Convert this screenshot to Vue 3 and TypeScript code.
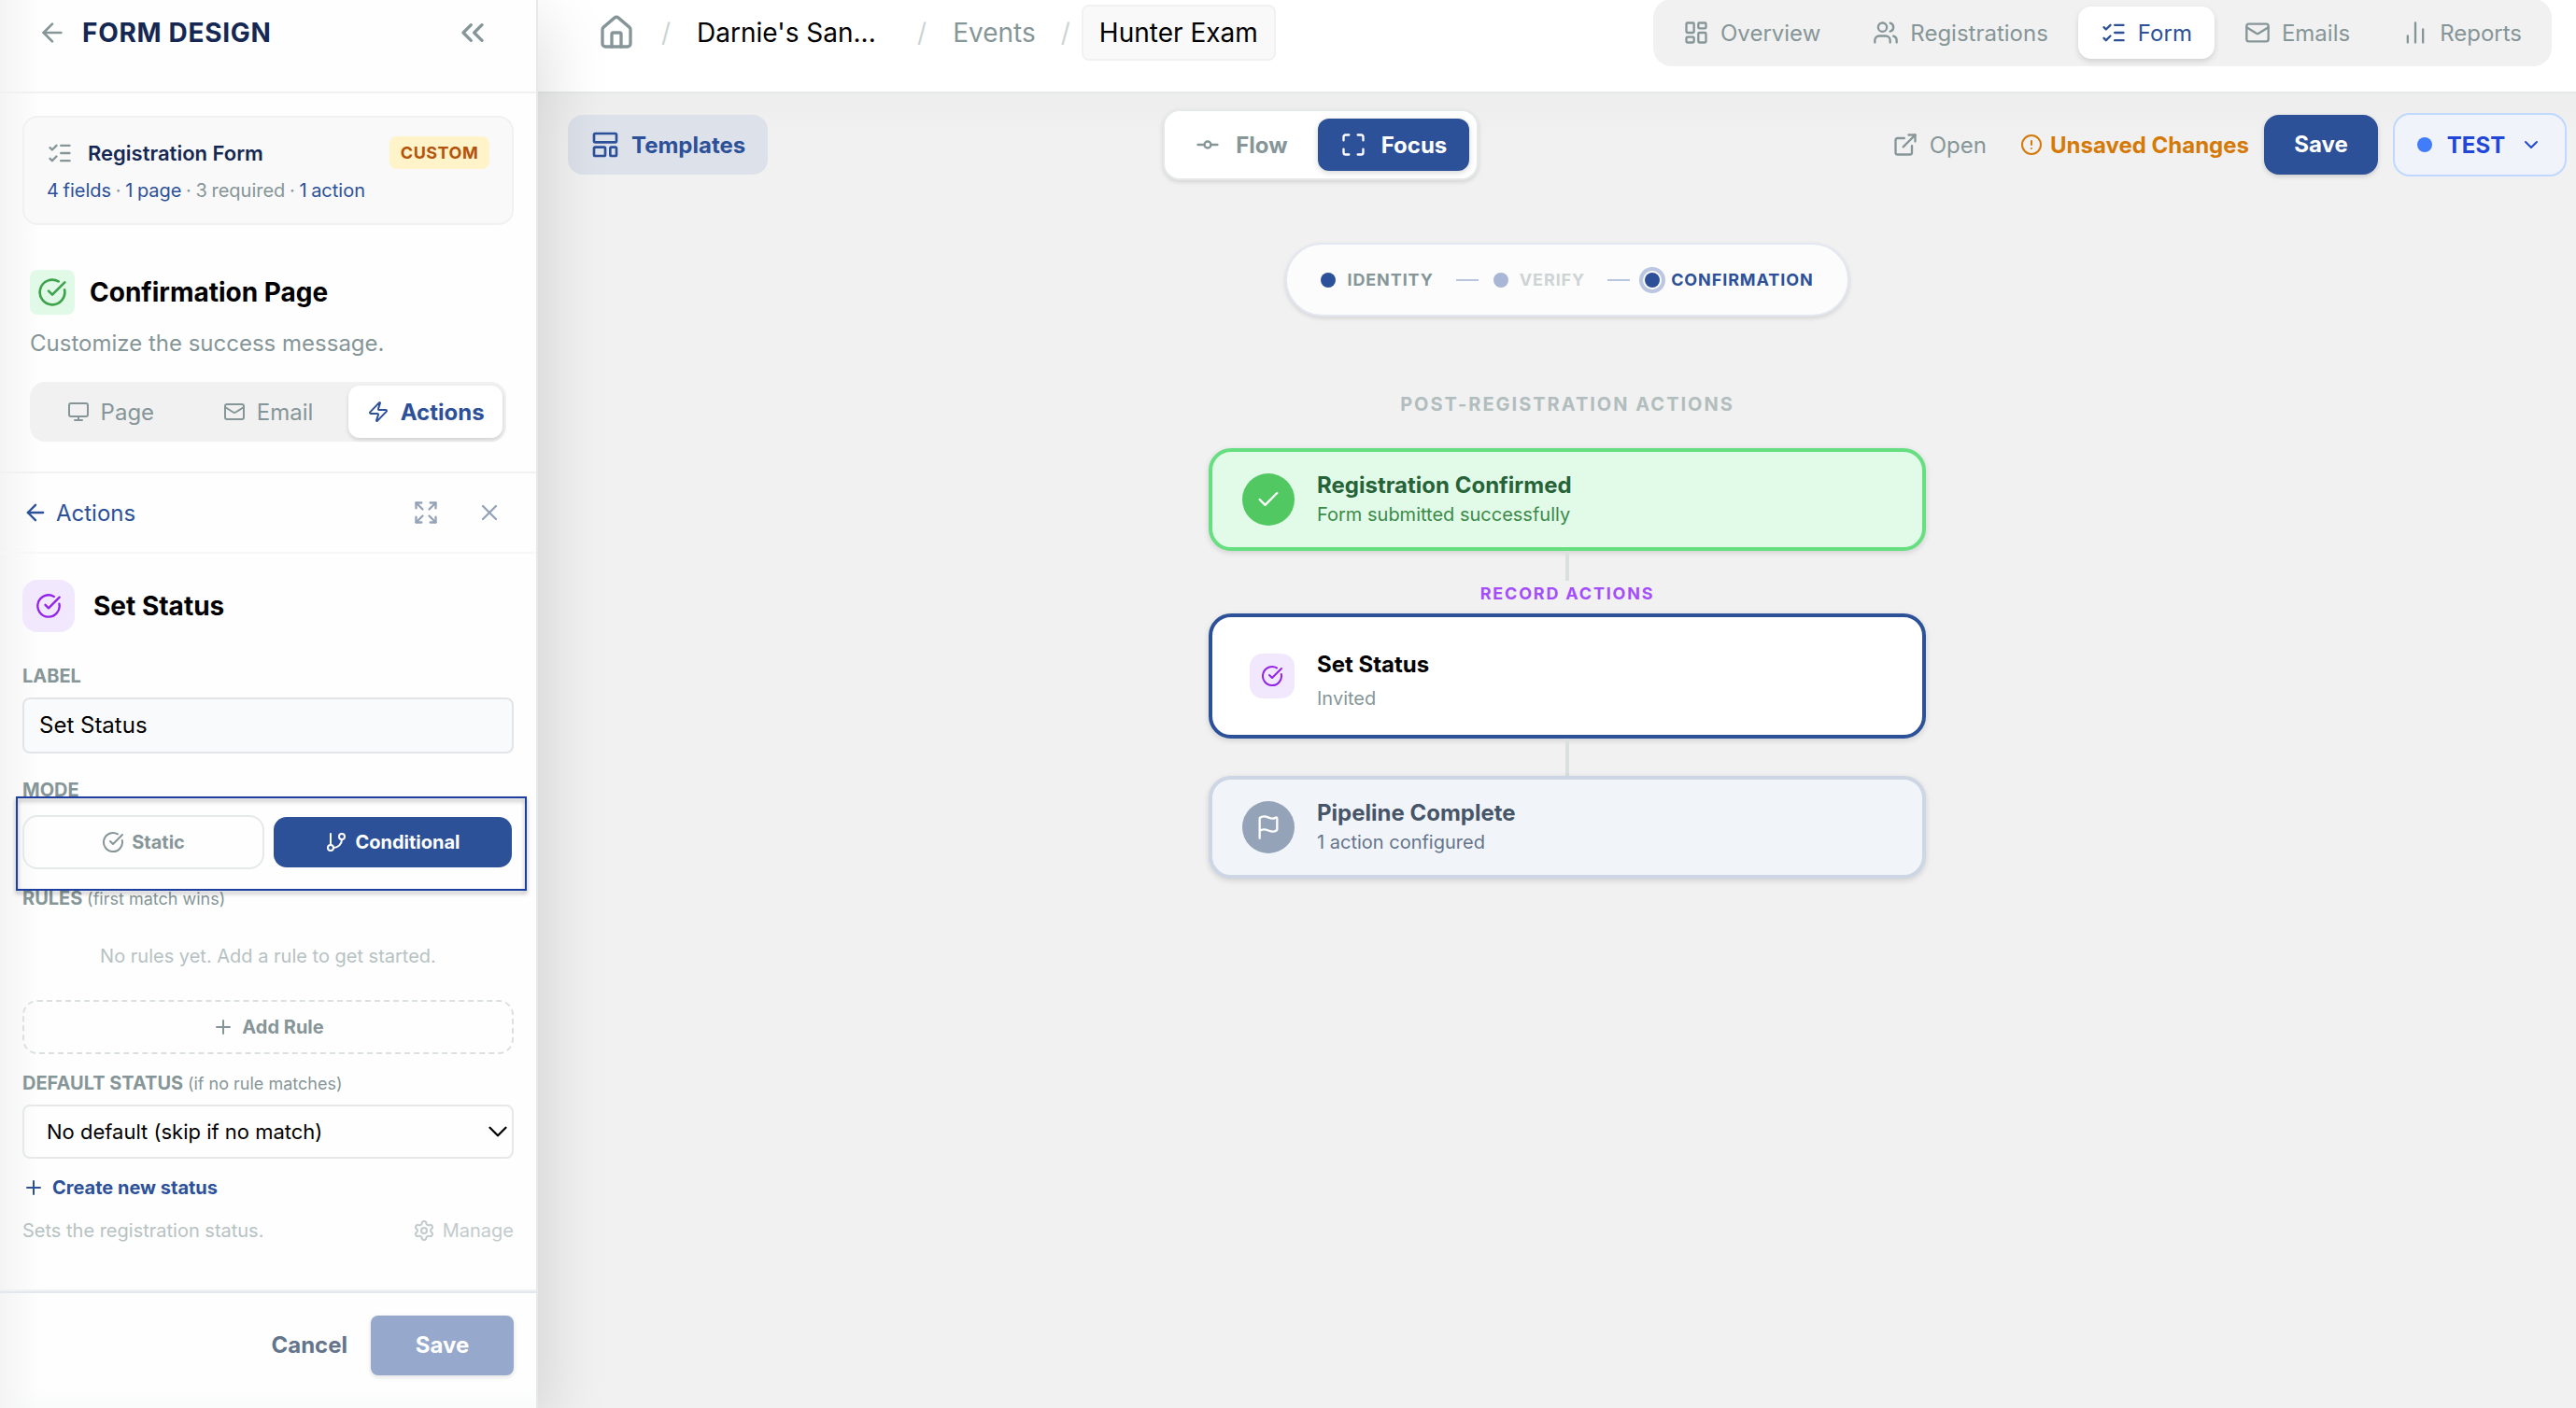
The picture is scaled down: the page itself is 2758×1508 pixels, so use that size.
<script setup lang="ts">
import { h, type FunctionalComponent } from 'vue'

type Shape = [tag: string, attrs: Record<string, string | number>]
const p = (d: string): Shape => ['path', { d }]
const rect = (x: number, y: number, width: number, height: number, rx = 1): Shape => ['rect', { x, y, width, height, rx }]
const circle = (cx: number, cy: number, r: number): Shape => ['circle', { cx, cy, r }]

const shapes: Record<string, Shape[]> = {
  back: [p('m12 19-7-7 7-7'), p('M19 12H5')],
  collapse: [p('m11 17-5-5 5-5'), p('m18 17-5-5 5-5')],
  checks: [p('M13 5h8'), p('M13 12h8'), p('M13 19h8'), p('m3 17 2 2 4-4'), p('m3 7 2 2 4-4')],
  circleCheck: [p('M21.801 10A10 10 0 1 1 17 3.335'), p('m9 11 3 3L22 4')],
  monitor: [rect(2, 3, 20, 14, 2), p('M8 21h8'), p('M12 17v4')],
  mail: [rect(2, 4, 20, 16, 2), p('m22 7-8.991 5.727a2 2 0 0 1-2.009 0L2 7')],
  zap: [p('M4 14a1 1 0 0 1-.78-1.63l9.9-10.2a.5.5 0 0 1 .86.46l-1.92 6.02A1 1 0 0 0 13 10h7a1 1 0 0 1 .78 1.63l-9.9 10.2a.5.5 0 0 1-.86-.46l1.92-6.02A1 1 0 0 0 11 14z')],
  expand: [p('m15 15 6 6'), p('m15 9 6-6'), p('M21 16v5h-5'), p('M21 8V3h-5'), p('M3 16v5h5'), p('m3 21 6-6'), p('M3 8V3h5'), p('M9 9 3 3')],
  close: [p('M18 6 6 18'), p('m6 6 12 12')],
  branch: [p('M6 3v12'), circle(18, 6, 3), circle(6, 18, 3), p('M18 9a9 9 0 0 1-9 9')],
  plus: [p('M5 12h14'), p('M12 5v14')],
  chevron: [p('m6 9 6 6 6-6')],
  gear: [p('M9.671 4.136a2.34 2.34 0 0 1 4.659 0 2.34 2.34 0 0 0 3.319 1.915 2.34 2.34 0 0 1 2.33 4.033 2.34 2.34 0 0 0 0 3.831 2.34 2.34 0 0 1-2.33 4.033 2.34 2.34 0 0 0-3.319 1.915 2.34 2.34 0 0 1-4.659 0 2.34 2.34 0 0 0-3.32-1.915 2.34 2.34 0 0 1-2.33-4.033 2.34 2.34 0 0 0 0-3.831A2.34 2.34 0 0 1 6.35 6.051a2.34 2.34 0 0 0 3.319-1.915'), circle(12, 12, 3)],
  house: [p('M15 21v-8a1 1 0 0 0-1-1h-4a1 1 0 0 0-1 1v8'), p('M3 10a2 2 0 0 1 .709-1.528l7-5.999a2 2 0 0 1 2.582 0l7 5.999A2 2 0 0 1 21 10v9a2 2 0 0 1-2 2H5a2 2 0 0 1-2-2z')],
  dashboard: [rect(3, 3, 7, 9), rect(14, 3, 7, 5), rect(14, 12, 7, 9), rect(3, 16, 7, 5)],
  users: [p('M16 21v-2a4 4 0 0 0-4-4H6a4 4 0 0 0-4 4v2'), p('M16 3.128a4 4 0 0 1 0 7.744'), p('M22 21v-2a4 4 0 0 0-3-3.87'), circle(9, 7, 4)],
  bars: [p('M5 21v-6'), p('M12 21V3'), p('M19 21V9')],
  template: [rect(3, 3, 18, 7), rect(3, 14, 9, 7), rect(16, 14, 5, 7)],
  commit: [circle(12, 12, 3), p('M3 12h6'), p('M15 12h6')],
  maximize: [p('M8 3H5a2 2 0 0 0-2 2v3'), p('M21 8V5a2 2 0 0 0-2-2h-3'), p('M3 16v3a2 2 0 0 0 2 2h3'), p('M16 21h3a2 2 0 0 0 2-2v-3')],
  external: [p('M15 3h6v6'), p('M10 14 21 3'), p('M18 13v6a2 2 0 0 1-2 2H5a2 2 0 0 1-2-2V8a2 2 0 0 1 2-2h6')],
  alert: [circle(12, 12, 10), p('M12 8v4'), p('M12 16h.01')],
  check: [p('M20 6 9 17l-5-5')],
  flag: [p('M4 22V4a1 1 0 0 1 .4-.8A6 6 0 0 1 8 2c3 0 5 2 7.333 2q2 0 3.067-.8A1 1 0 0 1 20 4v10a1 1 0 0 1-.4.8A6 6 0 0 1 16 16c-3 0-5-2-8-2a6 6 0 0 0-4 1.528')],
}

const Icon: FunctionalComponent<{ name: string; size?: number; w?: number }> = (props) =>
  h('svg', {
    width: props.size ?? 28, height: props.size ?? 28, viewBox: '0 0 24 24', fill: 'none',
    stroke: 'currentColor', 'stroke-width': props.w ?? 2, 'stroke-linecap': 'round', 'stroke-linejoin': 'round',
    style: 'flex:none;display:block',
  }, shapes[props.name].map(([tag, attrs]) => h(tag, attrs)))
Icon.props = ['name', 'size', 'w']

const pageTabs = [
  { label: 'Page', icon: 'monitor' },
  { label: 'Email', icon: 'mail' },
  { label: 'Actions', icon: 'zap', active: true },
]
const navTabs = [
  { label: 'Overview', icon: 'dashboard' },
  { label: 'Registrations', icon: 'users' },
  { label: 'Form', icon: 'checks', active: true },
  { label: 'Emails', icon: 'mail' },
  { label: 'Reports', icon: 'bars' },
]
</script>

<template>
  <div class="app">
    <aside class="sidebar">
      <header class="side-head">
        <Icon name="back" :size="32" />
        <h1>FORM DESIGN</h1>
        <Icon name="collapse" :size="40" class="push" />
      </header>

      <section class="summary">
        <div class="summary-top">
          <Icon name="checks" />
          <strong>Registration Form</strong>
          <span class="badge">CUSTOM</span>
        </div>
        <p><a>4 fields</a> · <a>1 page</a> · 3 required · <a>1 action</a></p>
      </section>

      <section class="page-info">
        <div class="page-title">
          <span class="page-icon"><Icon name="circleCheck" :size="32" /></span>
          <h2>Confirmation Page</h2>
        </div>
        <p class="desc">Customize the success message.</p>
        <div class="tabs">
          <div v-for="t in pageTabs" :key="t.label" class="tab" :class="{ active: t.active }">
            <Icon :name="t.icon" :size="24" /><span>{{ t.label }}</span>
          </div>
        </div>
      </section>

      <div class="crumb-bar">
        <a><Icon name="back" /><span>Actions</span></a>
        <Icon name="expand" class="push" />
        <Icon name="close" />
      </div>

      <section class="editor">
        <div class="editor-title">
          <span class="violet-icon"><Icon name="circleCheck" /></span>
          <h2>Set Status</h2>
        </div>
        <div class="label l-label">LABEL</div>
        <div class="input">Set Status</div>
        <div class="label l-mode">MODE</div>
        <div class="modes">
          <div class="mode"><Icon name="circleCheck" :size="24" /><span>Static</span></div>
          <div class="mode on"><Icon name="branch" :size="24" /><span>Conditional</span></div>
          <div class="marker"></div>
        </div>
        <div class="label l-rules">RULES <small>(first match wins)</small></div>
        <p class="empty">No rules yet. Add a rule to get started.</p>
        <div class="add"><Icon name="plus" :size="24" /><span>Add Rule</span></div>
        <div class="label l-default">DEFAULT STATUS <small>(if no rule matches)</small></div>
        <div class="select"><span>No default (skip if no match)</span><Icon name="chevron" :size="34" :w="1.6" /></div>
        <div class="create"><Icon name="plus" :size="24" /><span>Create new status</span></div>
        <div class="hint"><span>Sets the registration status.</span><span class="manage"><Icon name="gear" :size="24" />Manage</span></div>
      </section>

      <footer class="side-foot">
        <span class="cancel">Cancel</span>
        <span class="save-dim">Save</span>
      </footer>
    </aside>

    <main class="main">
      <header class="top">
        <nav class="crumbs">
          <Icon name="house" :size="40" class="home" />
          <i>/</i><span class="org">Darnie's San...</span>
          <i>/</i><span class="events">Events</span>
          <i>/</i><span class="chip">Hunter Exam</span>
        </nav>
        <nav class="nav">
          <div v-for="t in navTabs" :key="t.label" class="nav-tab" :class="{ active: t.active }">
            <Icon :name="t.icon" /><span>{{ t.label }}</span>
          </div>
        </nav>
      </header>

      <div class="canvas">
        <div class="toolbar">
          <div class="templates"><Icon name="template" :size="32" /><span>Templates</span></div>
          <div class="view">
            <div class="view-tab"><Icon name="commit" /><span>Flow</span></div>
            <div class="view-tab active"><Icon name="maximize" /><span>Focus</span></div>
          </div>
          <div class="tools">
            <div class="open"><Icon name="external" /><span>Open</span></div>
            <div class="unsaved"><Icon name="alert" :size="24" /><span>Unsaved Changes</span></div>
            <div class="save">Save</div>
            <div class="env"><b></b><span>TEST</span><Icon name="chevron" :size="24" /></div>
          </div>
        </div>

        <div class="stage">
          <div class="steps">
            <b class="dot"></b><span>IDENTITY</span><i></i>
            <b class="dot faded"></b><span class="muted">VERIFY</span><i></i>
            <b class="dot ring"></b><span class="current">CONFIRMATION</span>
          </div>
          <div class="caption">POST-REGISTRATION ACTIONS</div>

          <div class="card green">
            <span class="round"><Icon name="check" /></span>
            <div><h3>Registration Confirmed</h3><p>Form submitted successfully</p></div>
          </div>
          <div class="wire short"></div>
          <div class="group">RECORD ACTIONS</div>
          <div class="card selected">
            <span class="violet-icon small"><Icon name="circleCheck" :size="24" /></span>
            <div><h3>Set Status</h3><p>Invited</p></div>
          </div>
          <div class="wire"></div>
          <div class="card slate">
            <span class="round"><Icon name="flag" /></span>
            <div><h3>Pipeline Complete</h3><p>1 action configured</p></div>
          </div>
        </div>
      </div>
    </main>
  </div>
</template>

<style>
body { margin: 0; overflow: hidden; }
</style>

<style scoped>
.app { display: flex; width: 2758px; height: 1508px; overflow: hidden; font-family: Inter, "Liberation Sans", sans-serif; font-size: 24px; color: #869698; background: #f1f1f1; }
.app * { box-sizing: border-box; }
h1, h2, h3, p { margin: 0; }
i, b { font-style: normal; }
span, strong, h1, h2, h3, p { white-space: nowrap; }
.push { margin-left: auto; }

.sidebar { position: relative; z-index: 2; flex: none; display: flex; flex-direction: column; width: 576px; height: 1508px; border-right: 2px solid #e5e9e9; background: linear-gradient(90deg, #f4f4f4, #fff0 42px), linear-gradient(#fefefe 1486px, #f9fcfa); box-shadow: 8px 20px 66px rgba(0, 0, 0, .13); }
.side-head { display: flex; align-items: center; height: 100px; padding: 0 48px 28px 40px; border-bottom: 2px solid #f1f1f1; }
.side-head h1 { margin-left: 16px; font-size: 28px; font-weight: 700; letter-spacing: .7px; color: #152853; }
.summary { height: 117px; margin: 24px 24px 0; padding: 20px 24px 0 24px; border: 2px solid #f1f1f1; border-radius: 16px; background: #f9f9f9; }
.summary-top { display: flex; align-items: center; height: 35px; }
.summary strong { margin-left: 16px; font-size: 22px; font-weight: 620; color: #152853; }
.badge { margin-left: auto; width: 107px; height: 35px; line-height: 35px; text-align: center; border-radius: 8px; background: #fef3c9; color: #b4530c; font-size: 18px; font-weight: 700; letter-spacing: .5px; }
.summary p { margin-top: 11px; line-height: 24px; font-size: 20px; word-spacing: -1px; }
.summary a { color: #2c5199; }

.page-info { padding: 48px 32px 32px 32px; border-bottom: 2px solid #f1f1f1; }
.page-title { display: flex; align-items: center; height: 48px; }
.page-icon { display: grid; place-items: center; width: 48px; height: 48px; border-radius: 8px; background: #e1fae8; color: #3fa34d; }
.page-title h2, .editor-title h2 { margin-left: 16px; font-size: 28px; font-weight: 650; color: #000; }
.desc { margin-top: 14px; line-height: 34px; }
.tabs { display: flex; gap: 4px; height: 64px; margin-top: 24px; padding: 4px; border-radius: 16px; background: #f1f1f1; }
.tab { flex: 1 1 0; display: flex; align-items: center; justify-content: center; gap: 12px; border-radius: 12px; }
.tab.active { background: #fff; color: #2c5199; font-weight: 650; box-shadow: 0 2px 4px rgba(0, 0, 0, .14); }

.crumb-bar { display: flex; align-items: center; gap: 40px; height: 86px; padding: 0 36px 0 24px; border-bottom: 2px solid #f7f7f7; color: #94a3b8; }
.crumb-bar a { display: flex; align-items: center; gap: 8px; color: #2c5199; }

.editor { padding: 28px 24px 49px; }
.editor-title { display: flex; align-items: center; height: 56px; }
.editor-title h2 { margin-left: 20px; }
.violet-icon { flex: none; display: grid; place-items: center; width: 56px; height: 56px; border-radius: 16px; background: #f2e8fe; color: #9123ea; }
.label { height: 24px; line-height: 24px; font-size: 20px; font-weight: 650; white-space: nowrap; }
.label small { font-size: 18px; font-weight: 400; }
.l-label { margin-top: 35px; }
.l-mode { margin-top: 27px; }
.l-rules { margin-top: 19px; }
.l-default { margin-top: 19px; }
.input { height: 60px; margin-top: 11px; padding-left: 16px; line-height: 56px; border: 2px solid #e1e5e8; border-radius: 8px; background: #f9fafc; color: #000; }
.modes { position: relative; display: flex; gap: 8px; height: 58px; margin-top: 15px; }
.mode { flex: 1 1 0; display: flex; align-items: center; justify-content: center; gap: 8px; border: 2px solid #e5e9e9; border-radius: 16px; font-size: 20px; font-weight: 650; }
.mode.on { border-color: transparent; background: #2c5199 padding-box; color: #fff; }
.marker { position: absolute; left: -7px; right: -14px; top: -20px; height: 101px; border: 2px solid #1c3fa0; filter: drop-shadow(0 3px 2px rgba(0, 0, 0, .35)); }
.empty { margin-top: 36px; height: 28px; line-height: 28px; text-align: center; font-size: 20px; color: #b7c2c3; }
.add { display: flex; align-items: center; justify-content: center; gap: 8px; height: 58px; margin-top: 33px; border: 2px dashed #dbe0e0; border-radius: 16px; font-size: 20px; font-weight: 650; }
.select { display: flex; align-items: center; justify-content: space-between; height: 58px; margin-top: 11px; padding-left: 24px; border: 2px solid #e5e9e9; border-radius: 8px; font-size: 22px; color: #000; }
.select svg { margin-right: -2px; }
.create { display: flex; align-items: center; gap: 8px; height: 28px; margin-top: 17px; font-size: 20px; font-weight: 650; color: #2c5199; }
.hint { display: flex; align-items: center; justify-content: space-between; height: 28px; margin-top: 18px; font-size: 20px; color: #b7c2c3; }
.manage { display: flex; align-items: center; gap: 8px; color: #c2cbcc; }

.side-foot { flex: 1; display: flex; align-items: flex-start; justify-content: flex-end; padding: 24px 24px 0; border-top: 2px solid #f1f1f1; box-shadow: inset 0 2px #e2e7f0; font-weight: 650; line-height: 64px; }
.side-foot span { margin-top: 2px; }
.cancel { margin-right: 25px; color: #64748b; }
.save-dim { width: 153px; height: 64px; text-align: center; border-radius: 8px; background: #96a8cc; color: #fff; box-shadow: 0 2px 5px rgba(0, 0, 0, .12); }

.main { flex: 1; min-width: 0; }
.top { display: flex; align-items: center; justify-content: space-between; height: 100px; padding: 0 26px 28px 64px; border-bottom: 2px solid #e5eae9; background: #fff; }
.crumbs { display: flex; align-items: center; font-size: 28px; color: #000; }
.crumbs i { color: #cdd4d4; }
.home { color: #869698; }
.org { width: 200px; margin: 0 36px 0 28px; }
.crumbs i:first-of-type { margin-left: 28px; }
.events { margin: 0 27px 0 28px; color: #869698; }
.chip { height: 60px; margin-left: 12px; padding: 0 17px; line-height: 56px; border: 2px solid #f1f1f1; border-radius: 8px; background: #f9f9f9; }
.nav { flex: none; display: flex; gap: 8px; height: 72px; padding: 8px; border-radius: 20px; background: #f1f1f1; }
.nav-tab { display: flex; align-items: center; gap: 12px; padding: 0 24px; border-radius: 14px; }
.nav-tab.active { background: #fff; color: #2c5199; box-shadow: 0 3px 6px rgba(0, 0, 0, .13); }

.canvas { height: 1408px; background: linear-gradient(#ededed, #f1f1f1 50px); }
.toolbar { display: flex; align-items: center; justify-content: space-between; height: 110px; padding: 0 10px 0 32px; font-weight: 650; }
.templates { display: flex; align-items: center; gap: 12px; height: 64px; padding: 0 24px; border-radius: 16px; background: #dde1ea; color: #2c5199; }
.view { display: flex; gap: 8px; height: 76px; padding: 8px; border: 2px solid #e5eae9; border-radius: 18px; background: #fff; box-shadow: 0 2px 5px rgba(0, 0, 0, .13); }
.view-tab { display: flex; align-items: center; justify-content: center; gap: 16px; width: 148px; border-radius: 12px; }
.view-tab.active { width: 162px; background: #2c5199; color: #fff; box-shadow: 0 2px 6px rgba(0, 0, 0, .16); }
.tools { display: flex; align-items: center; }
.open { display: flex; align-items: center; gap: 12px; padding: 0 36px 0 20px; font-weight: 400; }
.unsaved { display: flex; align-items: center; gap: 8px; color: #d57908; }
.save { width: 122px; height: 64px; margin: 0 16px; text-align: center; line-height: 64px; border-radius: 16px; background: #2c5199; color: #fff; box-shadow: 0 2px 5px rgba(0, 0, 0, .16); }
.env { display: flex; align-items: center; justify-content: space-between; width: 186px; height: 68px; padding: 0 24px; border: 2px solid #bfd8fe; border-radius: 18px; background: #f0f4fa; color: #2146d8; font-weight: 700; }
.env b { width: 16px; height: 16px; border-radius: 50%; background: #417cfb; }

.stage { display: flex; flex-direction: column; align-items: center; padding: 50px 0 0 22px; }
.steps { display: flex; align-items: center; height: 79px; padding: 0 36px; border: 2px solid #e3e7f1; border-radius: 40px; background: #fcfcfc; font-size: 18px; font-weight: 650; letter-spacing: .9px; box-shadow: 0 2px 5px rgba(0, 0, 0, .13); }
.steps i { width: 24px; height: 2px; margin: 0 16px 0 24px; background: #b9c6e0; }
.dot { width: 16px; height: 16px; margin-right: 12px; border-radius: 50%; background: #2c5199; }
.faded { background: #a9b6d6; }
.ring { box-shadow: 0 0 0 2px #fff, 0 0 0 6px #bbc7e0; }
.muted { color: #ced4d4; }
.current { color: #2c5199; }
.caption { height: 28px; line-height: 28px; margin-top: 80px; font-size: 20px; font-weight: 650; letter-spacing: 2px; color: #b2bdbe; }
.card { display: flex; align-items: center; gap: 24px; width: 768px; height: 110px; padding-left: 32px; border: 4px solid; border-radius: 24px; box-shadow: 0 2px 6px rgba(0, 0, 0, .14); }
.card h3 { line-height: 32px; font-size: 24px; font-weight: 650; }
.card p { line-height: 30px; font-size: 20px; }
.round { display: grid; place-items: center; width: 56px; height: 56px; border-radius: 50%; color: #fff; }
.green { margin-top: 33px; border-color: #66df80; background: #e2fae8; }
.green .round { background: #51c862; }
.green h3 { color: #276338; }
.green p { color: #3b8a48; }
.selected { height: 134px; padding-left: 40px; border-color: #2c5199; background: #fff; }
.selected div { padding-top: 11px; }
.selected h3 { line-height: 37px; color: #000; }
.selected p { line-height: 37px; }
.small { width: 48px; height: 48px; border-radius: 14px; }
.slate { border-color: #cdd6e5; background: #f1f5fa; }
.slate .round { background: #94a3b8; }
.slate h3 { color: #475569; }
.slate p { color: #64748b; }
.wire { width: 4px; height: 40px; background: #dadfdf; }
.short { height: 32px; }
.group { height: 35px; line-height: 27px; font-size: 18px; font-weight: 650; letter-spacing: 1.8px; color: #a44dfb; }
</style>
